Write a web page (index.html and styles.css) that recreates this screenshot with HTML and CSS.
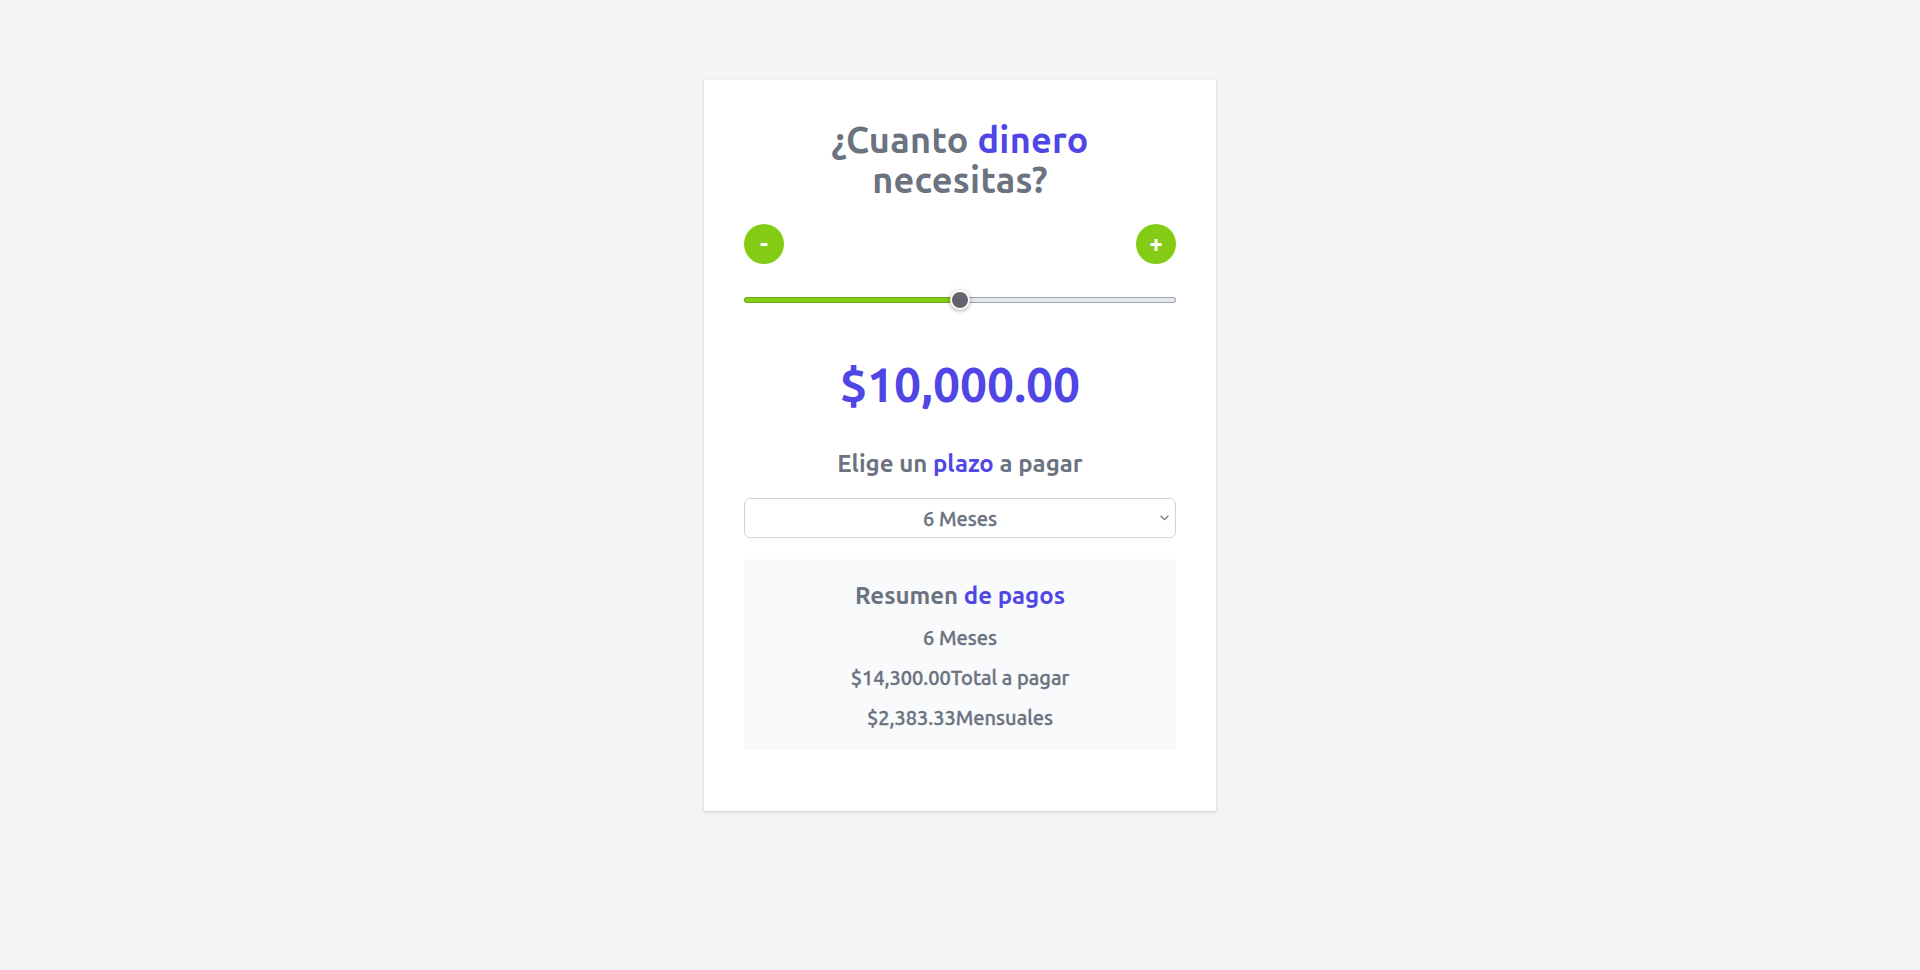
FILE: index.html
```html
<!DOCTYPE html>
<html lang="es">
<head>
<meta charset="utf-8">
<title>Cotizador</title>
<link rel="stylesheet" href="styles.css">
</head>
<body>
<main class="card">
  <h1 class="title">¿Cuanto <span class="accent">dinero</span> necesitas?</h1>
  <div class="controls">
    <button class="round-btn" type="button">-</button>
    <button class="round-btn" type="button">+</button>
  </div>
  <input class="range" type="range" min="0" max="20000" step="100" value="10000" style="--fill: 50%">
  <p class="amount">$10,000.00</p>
  <h2 class="subtitle">Elige un <span class="accent">plazo</span> a pagar</h2>
  <div class="select-wrap">
    <select class="select">
      <option>3 Meses</option>
      <option selected>6 Meses</option>
      <option>12 Meses</option>
      <option>24 Meses</option>
    </select>
    <svg class="chevron" width="9" height="6" viewBox="0 0 9 6" aria-hidden="true"><path d="M1 1.2 L4.5 4.6 L8 1.2" fill="none" stroke="#6b7280" stroke-width="1.3" stroke-linecap="round" stroke-linejoin="round"/></svg>
  </div>
  <section class="summary">
    <h2 class="summary-title">Resumen <span class="accent">de pagos</span></h2>
    <p class="summary-line">6 Meses</p>
    <p class="summary-line"><span>$14,300.00</span><span>Total a pagar</span></p>
    <p class="summary-line"><span>$2,383.33</span><span>Mensuales</span></p>
  </section>
</main>
</body>
</html>
```
FILE: styles.css
```css
* { box-sizing: border-box; }

body {
  margin: 0;
  background: #f3f4f6;
  font-family: Ubuntu, Lato, "Open Sans", sans-serif;
  color: #6b7280;
  min-height: 970px;
}

.card {
  width: 512px;
  margin: 80px auto 0;
  background: #ffffff;
  padding: 40px;
  box-shadow: 0 1px 3px rgba(0, 0, 0, 0.12), 0 1px 2px rgba(0, 0, 0, 0.06);
}

.accent { color: #4f46e5; }

.title {
  margin: 0 auto;
  max-width: 380px;
  font-size: 36px;
  line-height: 40px;
  letter-spacing: 0.3px;
  font-weight: 700;
  text-align: center;
  color: #6b7280;
}

.controls {
  display: flex;
  justify-content: space-between;
  margin-top: 24px;
}

.round-btn {
  width: 40px;
  height: 40px;
  border: none;
  border-radius: 50%;
  background: #84cc16;
  color: #ffffff;
  font-family: inherit;
  font-size: 24px;
  font-weight: 700;
  line-height: 40px;
  padding: 0;
  cursor: pointer;
}

.range {
  -webkit-appearance: none;
  appearance: none;
  display: block;
  width: 100%;
  height: 20px;
  margin: 26px 0 0;
  background: transparent;
}

.range::-webkit-slider-runnable-track {
  height: 6px;
  border-radius: 3px;
  border: 1px solid transparent;
  background:
    linear-gradient(to right, #84cc16 var(--fill), #e5e7eb var(--fill)) padding-box,
    linear-gradient(to right, #6ba812 var(--fill), #9ca3af var(--fill)) border-box;
}

.range::-webkit-slider-thumb {
  -webkit-appearance: none;
  appearance: none;
  width: 20px;
  height: 20px;
  margin-top: -8px;
  border-radius: 50%;
  background: #63626e;
  border: 2px solid #ffffff;
  box-shadow: 0 1px 4px rgba(0, 0, 0, 0.35);
}

.amount {
  margin: 50px 0 0;
  font-size: 48px;
  line-height: 48px;
  font-weight: 700;
  text-align: center;
  color: #4f46e5;
}

.subtitle {
  margin: 40px 0 0;
  font-size: 24px;
  line-height: 32px;
  font-weight: 700;
  text-align: center;
  color: #6b7280;
}

.select-wrap {
  position: relative;
  margin-top: 18px;
}

.select {
  -webkit-appearance: none;
  appearance: none;
  display: block;
  width: 100%;
  height: 40px;
  border: 1px solid #d1d5db;
  border-radius: 6px;
  background: #ffffff;
  font-family: inherit;
  font-size: 20px;
  font-weight: 500;
  -webkit-text-stroke: 0.35px currentColor;
  color: #6b7280;
  text-align: center;
  text-align-last: center;
  padding: 0 24px;
}

.chevron {
  position: absolute;
  right: 7px;
  top: 17px;
}

.summary {
  margin: 21px 0 21px;
  background: #f9fafb;
  padding: 21px 16px 18px;
  text-align: center;
}

.summary-title {
  margin: 0;
  font-size: 24px;
  line-height: 32px;
  font-weight: 700;
  color: #6b7280;
}

.summary-line {
  margin: 12px 0 0;
  font-size: 20px;
  line-height: 28px;
  font-weight: 500;
  -webkit-text-stroke: 0.35px currentColor;
  color: #6b7280;
}
```
